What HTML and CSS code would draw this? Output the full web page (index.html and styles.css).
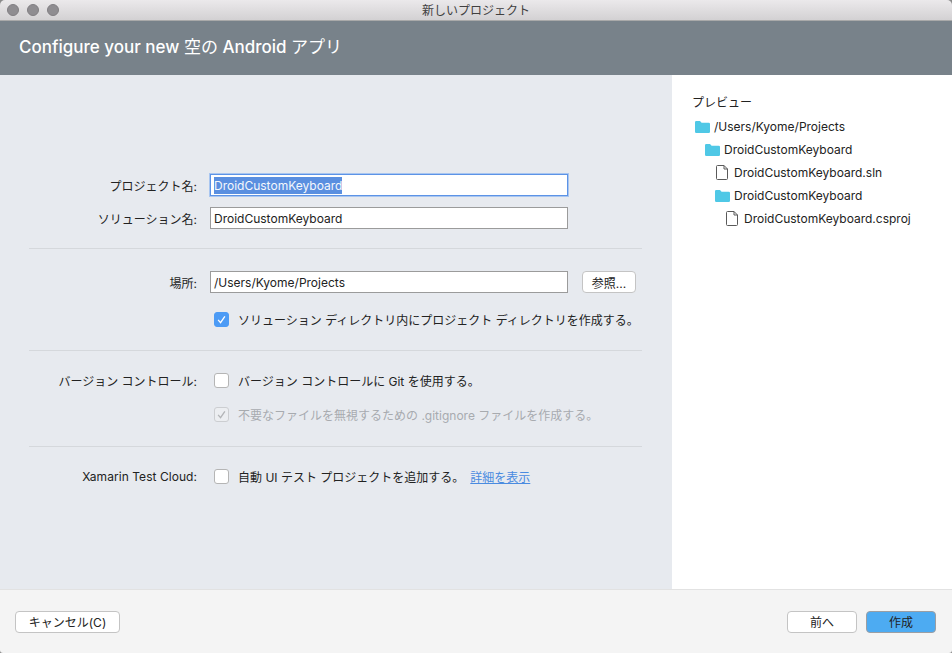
FILE: index.html
```html
<!DOCTYPE html>
<html lang="ja">
<head>
    <meta charset="UTF-8">
    <meta name="viewport" content="width=device-width, initial-scale=1.0">
    <title>新しいプロジェクト</title>
    <link rel="stylesheet" href="styles.css">
</head>
<body>
    <div class="window">
        <div class="titlebar">
            <div class="lights"><span></span><span></span><span></span></div>
            <div class="title">新しいプロジェクト</div>
        </div>
        <div class="banner"><div>Configure your new <span class="thin">空の</span> Android <span class="thin">アプリ</span></div></div>
        <div class="main">
            <div class="form">
                <div class="section first">
                    <div class="row">
                        <label>プロジェクト名:</label>
                        <div class="field focused"><span class="selected">DroidCustomKeyboard</span></div>
                    </div>
                    <div class="row">
                        <label>ソリューション名:</label>
                        <div class="field">DroidCustomKeyboard</div>
                    </div>
                </div>
                <div class="section location">
                    <div class="row">
                        <label>場所:</label>
                        <div class="field">/Users/Kyome/Projects</div>
                        <button class="btn browse">参照...</button>
                    </div>
                    <div class="check-row">
                        <span class="check on"><svg viewBox="0 0 15 15"><path d="M3.6 8 L6.4 11.2 L11.4 3.8" /></svg></span>
                        <span>ソリューション ディレクトリ内にプロジェクト ディレクトリを作成する。</span>
                    </div>
                </div>
                <div class="section vcs">
                    <div class="check-row labelled">
                        <label>バージョン コントロール:</label>
                        <span class="check"></span>
                        <span>バージョン コントロールに Git を使用する。</span>
                    </div>
                    <div class="check-row disabled">
                        <span class="check dim"><svg viewBox="0 0 15 15"><path d="M3.6 8 L6.4 11.2 L11.4 3.8" /></svg></span>
                        <span>不要なファイルを無視するための .gitignore ファイルを作成する。</span>
                    </div>
                </div>
                <div class="section cloud">
                    <div class="check-row labelled">
                        <label class="latin">Xamarin Test Cloud:</label>
                        <span class="check"></span>
                        <span>自動 UI テスト プロジェクトを追加する。</span>
                        <a class="more" href="#">詳細を表示</a>
                    </div>
                </div>
            </div>
            <div class="preview">
                <div class="preview-title">プレビュー</div>
                <ul class="tree">
                    <li class="depth0"><svg class="folder" viewBox="0 0 15 12"><path d="M0 1.2 Q0 0 1.2 0 H5 L6.6 1.8 H13.8 Q15 1.8 15 3 V10.8 Q15 12 13.8 12 H1.2 Q0 12 0 10.8 Z" /></svg>/Users/Kyome/Projects</li>
                    <li class="depth1"><svg class="folder" viewBox="0 0 15 12"><path d="M0 1.2 Q0 0 1.2 0 H5 L6.6 1.8 H13.8 Q15 1.8 15 3 V10.8 Q15 12 13.8 12 H1.2 Q0 12 0 10.8 Z" /></svg>DroidCustomKeyboard</li>
                    <li class="depth2"><svg class="file" viewBox="0 0 12 15"><path d="M1.5 .5 H8 L11.5 4 V13.5 Q11.5 14.5 10.5 14.5 H1.5 Q.5 14.5 .5 13.5 V1.5 Q.5 .5 1.5 .5 Z M8 .5 V4 H11.5" /></svg>DroidCustomKeyboard.sln</li>
                    <li class="depth2"><svg class="folder" viewBox="0 0 15 12"><path d="M0 1.2 Q0 0 1.2 0 H5 L6.6 1.8 H13.8 Q15 1.8 15 3 V10.8 Q15 12 13.8 12 H1.2 Q0 12 0 10.8 Z" /></svg>DroidCustomKeyboard</li>
                    <li class="depth3"><svg class="file" viewBox="0 0 12 15"><path d="M1.5 .5 H8 L11.5 4 V13.5 Q11.5 14.5 10.5 14.5 H1.5 Q.5 14.5 .5 13.5 V1.5 Q.5 .5 1.5 .5 Z M8 .5 V4 H11.5" /></svg>DroidCustomKeyboard.csproj</li>
                </ul>
            </div>
        </div>
        <div class="footer">
            <button class="btn cancel">キャンセル(C)</button>
            <div class="footer-right">
                <button class="btn nav">前へ</button>
                <button class="btn nav primary">作成</button>
            </div>
        </div>
    </div>
</body>
</html>
```

FILE: styles.css
```css
* {
    box-sizing: border-box;
}
html, body {
    height: 100%;
}
body {
    margin: 0;
    background: #8a8a8a;
    font-family: Inter, "Noto Sans CJK JP", sans-serif;
    font-size: 12px;
    color: #222;
}
.window {
    width: 952px;
    height: 653px;
    display: flex;
    flex-direction: column;
    border-radius: 5px 5px 3px 3px;
    overflow: hidden;
}
.titlebar {
    height: 21px;
    flex: none;
    display: flex;
    align-items: center;
    justify-content: center;
    background: linear-gradient(#ebe9eb, #d3d1d3);
    border-bottom: 1px solid #a9a9a9;
    position: relative;
}
.lights {
    position: absolute;
    left: 7px;
    top: 4px;
    display: flex;
    gap: 8px;
}
.lights span {
    width: 12px;
    height: 12px;
    border-radius: 50%;
    background: #8f8d91;
    border: 1px solid #807e82;
}
.title {
    color: #404040;
    font-size: 12px;
    margin-bottom: 1px;
}
.banner {
    height: 54px;
    flex: none;
    background: #78828a;
    color: #fff;
    font-size: 17px;
    font-weight: 500;
    padding: 0 19px 6px;
    display: flex;
    align-items: center;
}
.thin {
    font-weight: 400;
}
.main {
    flex: 1;
    display: flex;
    min-height: 0;
}
.form {
    width: 672px;
    flex: none;
    background: #e7eaef;
    padding: 99px 29px 0;
}
.section {
    width: 613px;
    border-top: 1px solid #d5d8dc;
}
.section.first {
    border-top: none;
    display: flex;
    flex-direction: column;
    gap: 11px;
    height: 74px;
}
.section.location {
    padding-top: 22px;
    height: 102px;
}
.section.vcs {
    padding-top: 18px;
    height: 96px;
}
.section.cloud {
    padding-top: 18px;
}
.row {
    display: flex;
    align-items: center;
    height: 22px;
}
label {
    width: 168px;
    margin-right: 13px;
    flex: none;
    text-align: right;
}
.latin {
    letter-spacing: .05px;
}
.field {
    width: 358px;
    height: 22px;
    flex: none;
    background: #fff;
    border: 1px solid #9b9b9b;
    padding: 1px 0 0 3px;
    font-size: 12px;
    line-height: 20px;
    white-space: nowrap;
}
.field.focused {
    padding-top: 0;
    border: 1px solid #5c93e6;
    box-shadow: 0 0 0 1px #a9c6f0;
}
.selected {
    background: #5a8fe0;
    color: #f4f7fc;
    display: inline-block;
    height: 17px;
    line-height: 17px;
    vertical-align: top;
    margin-top: 2px;
}
.btn {
    font: inherit;
    background: #fff;
    border: 1px solid #c4c4c4;
    border-radius: 4px;
    color: #222;
    height: 22px;
    padding: 0;
}
.browse {
    width: 54px;
    margin-left: 14px;
}
.check-row {
    display: flex;
    align-items: center;
    height: 22px;
    padding-left: 185px;
    gap: 9px;
    white-space: nowrap;
}
.location .check-row {
    margin-top: 15px;
}
.check-row.labelled {
    padding-left: 0;
    gap: 0;
}
.check-row.labelled .check {
    margin-left: 4px;
    margin-right: 9px;
}
.check-row.disabled {
    margin-top: 12px;
    color: #a8abaf;
}
.check {
    width: 15px;
    height: 15px;
    flex: none;
    background: #fff;
    border: 1px solid #b5b5b5;
    border-radius: 3px;
    display: flex;
}
.check svg {
    width: 100%;
    height: 100%;
    fill: none;
    stroke: #fff;
    stroke-width: 1.5;
}
.check.on {
    background: #4c9bf5;
    border-color: #4c9bf5;
}
.check.dim {
    background: #eceef1;
    border-color: #ccced1;
}
.check.dim svg {
    stroke: #b2b4b7;
}
.more {
    color: #4a8be0;
    margin-left: 6px;
}
.preview {
    flex: 1;
    background: #fff;
    padding: 19px 0 0 20px;
}
.preview-title {
    height: 17px;
    line-height: 17px;
    margin-bottom: 4px;
}
.tree {
    list-style: none;
    margin: 0;
    padding: 0;
    font-size: 12px;
}
.tree li {
    height: 23px;
    display: flex;
    align-items: center;
    white-space: nowrap;
}
.folder {
    width: 15px;
    height: 12px;
    fill: #4fc8e6;
    margin-right: 4px;
    margin-left: 3px;
}
.file {
    width: 12px;
    height: 15px;
    fill: none;
    stroke: #5a5a5a;
    stroke-width: 1;
    margin: 0 6px 0 4px;
}
.depth1 {
    padding-left: 10px;
}
.depth2 {
    padding-left: 20px;
}
.depth3 {
    padding-left: 30px;
}
.footer {
    height: 64px;
    flex: none;
    background: #f4f4f4;
    border-top: 1px solid #e2e2e2;
    display: flex;
    align-items: center;
    justify-content: space-between;
    padding: 0 16px 0 15px;
}
.cancel {
    width: 105px;
}
.footer-right {
    display: flex;
    gap: 9px;
}
.nav {
    width: 70px;
}
.primary {
    background: #4dabf2;
    border-color: #9b9ea3;
}
```
